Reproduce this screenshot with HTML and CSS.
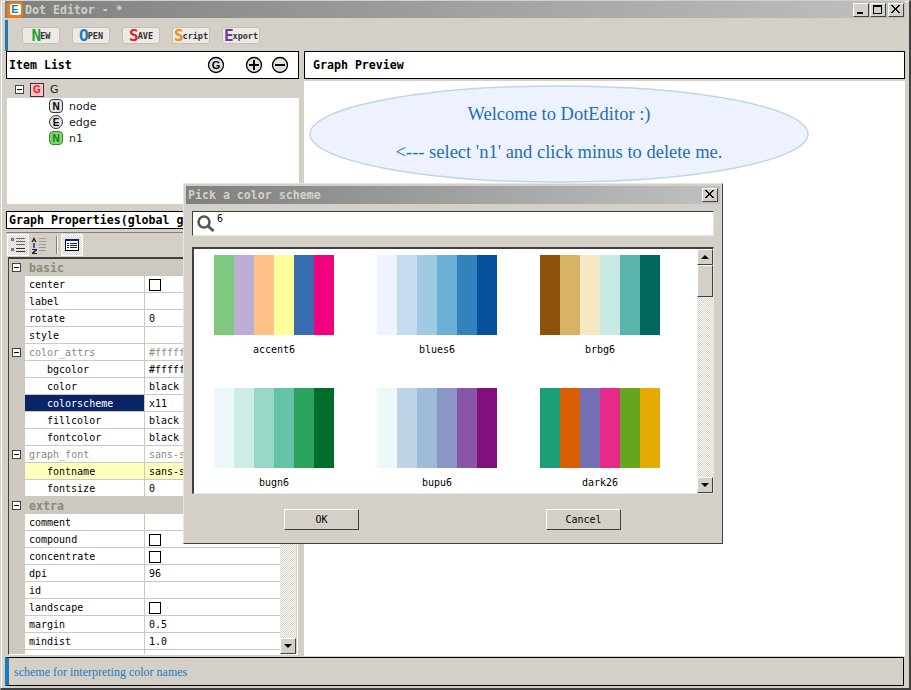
FILE: index.html
```html
<!DOCTYPE html>
<html lang="en">
<head>
    <meta charset="UTF-8">
    <meta name="viewport" content="width=device-width, initial-scale=1.0">
    <title>Dot Editor</title>
    <link rel="stylesheet" href="styles.css">
</head>
<body>
<div class="window">
    <!-- Title bar -->
    <div class="title-bar">
        <span class="app-icon"><span>E</span></span>
        <span class="title-text">Dot Editor - *</span>
        <div class="win-buttons">
            <button class="win-btn"><svg width="15" height="13" viewBox="0 0 15 13"><rect x="4" y="9" width="6" height="2" fill="#000"/></svg></button>
            <button class="win-btn"><svg width="15" height="13" viewBox="0 0 15 13"><rect x="3.5" y="2.5" width="8" height="8" fill="none" stroke="#000"/><rect x="3" y="2" width="9" height="2" fill="#000"/></svg></button>
            <button class="win-btn win-close"><svg width="15" height="13" viewBox="0 0 15 13"><path d="M3 2l8 8M4 2l8 8M11 2l-8 8M12 2l-8 8" stroke="#000" fill="none"/></svg></button>
        </div>
    </div>

    <!-- Toolbar -->
    <div class="toolbar">
        <button class="tool-btn"><b class="c-green">N</b>EW</button>
        <button class="tool-btn"><b class="c-blue">O</b>PEN</button>
        <button class="tool-btn"><b class="c-red">S</b>AVE</button>
        <button class="tool-btn"><b class="c-orange">S</b>cript</button>
        <button class="tool-btn"><b class="c-purple">E</b>xport</button>
    </div>

    <div class="panes">
        <!-- Left column -->
        <div class="left-pane">
            <div class="head-box item-head">
                <span class="head-label">Item List</span>
                <div class="head-icons">
                    <svg class="g-btn" width="18" height="18" viewBox="0 0 18 18"><circle cx="9" cy="9" r="7.5" fill="#e2e2e2" stroke="#000" stroke-width="1.3"/><text x="9" y="13" text-anchor="middle" class="g-letter">G</text></svg>
                    <svg class="plus-btn" width="18" height="18" viewBox="0 0 18 18"><circle cx="9" cy="9" r="7.5" fill="#e2e2e2" stroke="#000" stroke-width="1.3"/><path d="M4 9h10M9 4v10" stroke="#000" stroke-width="2"/></svg>
                    <svg class="minus-btn" width="18" height="18" viewBox="0 0 18 18"><circle cx="9" cy="9" r="7.5" fill="#e2e2e2" stroke="#000" stroke-width="1.3"/><path d="M4 9h10" stroke="#000" stroke-width="2"/></svg>
                </div>
            </div>

            <div class="tree">
                <div class="tree-root">
                    <span class="box"></span>
                    <span class="badge badge-g">G</span>
                    <span class="tree-label">G</span>
                </div>
                <div class="tree-body">
                    <div class="tree-row"><span class="badge badge-n">N</span><span class="tree-label">node</span></div>
                    <div class="tree-row"><span class="badge badge-e">E</span><span class="tree-label">edge</span></div>
                    <div class="tree-row"><span class="badge badge-g2">N</span><span class="tree-label">n1</span></div>
                </div>
            </div>

            <div class="head-box props-head"><span class="head-label">Graph Properties(global graph)</span></div>

            <div class="grid-tools">
                <span class="grid-tool pressed">
                    <svg width="18" height="18" viewBox="0 0 18 18"><g fill="#777"><rect x="2" y="2" width="3" height="3"/><rect x="2" y="12" width="3" height="3"/></g><path d="M7 2.500h9M7 5.500h9M7 8.500h9" stroke="#666"/><path d="M7 12.500h9M7 15.500h9" stroke="#333"/></svg>
                </span>
                <span class="grid-tool">
                    <svg width="18" height="18" viewBox="0 0 18 18"><path d="M3 1L.5 6h1.500L3 4l1 2h1.500zM1 13h5v1.300L3 17h3v1H1v-1.300L4 14H1z" fill="#222"/><path d="M3 7v5" stroke="#1a2fb0" stroke-width="1.500"/><path d="M8 2.500h7M8 5.500h7M8 8.500h7M8 11.500h7M8 14.500h7" stroke="#999"/></svg>
                </span>
                <span class="tool-sep"></span>
                <span class="grid-tool pressed">
                    <svg width="18" height="18" viewBox="0 0 18 18"><rect x="2.500" y="3.500" width="13" height="11" fill="#fff" stroke="#000"/><rect x="2" y="3" width="14" height="2" fill="#0a1f8f"/><path d="M4 7.500h2M7 7.500h7M4 9.500h2M7 9.500h7M4 11.500h2M7 11.500h7" stroke="#0a1f8f"/></svg>
                </span>
            </div>

            <div class="prop-grid">
                <div class="prop-rows">
                    <div class="group"><span class="box"></span><span>basic</span></div>
                    <div class="row"><span class="name">center</span><span class="value"><i class="check"></i></span></div>
                    <div class="row"><span class="name">label</span><span class="value"></span></div>
                    <div class="row"><span class="name">rotate</span><span class="value">0</span></div>
                    <div class="row"><span class="name">style</span><span class="value"></span></div>
                    <div class="row muted"><span class="box"></span><span class="name">color_attrs</span><span class="value">#ffffff</span></div>
                    <div class="row sub"><span class="name">bgcolor</span><span class="value">#ffffff</span></div>
                    <div class="row sub"><span class="name">color</span><span class="value">black</span></div>
                    <div class="row sub selected"><span class="name">colorscheme</span><span class="value">x11</span></div>
                    <div class="row sub"><span class="name">fillcolor</span><span class="value">black</span></div>
                    <div class="row sub"><span class="name">fontcolor</span><span class="value">black</span></div>
                    <div class="row muted"><span class="box"></span><span class="name">graph_font</span><span class="value">sans-serif</span></div>
                    <div class="row sub changed"><span class="name">fontname</span><span class="value">sans-serif</span></div>
                    <div class="row sub"><span class="name">fontsize</span><span class="value">0</span></div>
                    <div class="group"><span class="box"></span><span>extra</span></div>
                    <div class="row"><span class="name">comment</span><span class="value"></span></div>
                    <div class="row"><span class="name">compound</span><span class="value"><i class="check"></i></span></div>
                    <div class="row"><span class="name">concentrate</span><span class="value"><i class="check"></i></span></div>
                    <div class="row"><span class="name">dpi</span><span class="value">96</span></div>
                    <div class="row"><span class="name">id</span><span class="value"></span></div>
                    <div class="row"><span class="name">landscape</span><span class="value"><i class="check"></i></span></div>
                    <div class="row"><span class="name">margin</span><span class="value">0.5</span></div>
                    <div class="row"><span class="name">mindist</span><span class="value">1.0</span></div>
                    <div class="row"><span class="name"></span><span class="value"></span></div>
                </div>
                <div class="scrollbar">
                    <span class="scroll-btn"><i class="arrow-up"></i></span>
                    <span class="scroll-track"></span>
                    <span class="scroll-btn"><i class="arrow-down"></i></span>
                </div>
            </div>
        </div>

        <!-- Right column -->
        <div class="right-pane">
            <div class="head-box"><span class="head-label preview-label">Graph Preview</span></div>
            <div class="preview">
                <svg class="graph" width="601" height="574" viewBox="0 0 601 574">
                    <ellipse cx="255" cy="53" rx="249" ry="48" fill="#edf2fe" stroke="#bcd7e8" stroke-width="1.500"/>
                    <text x="255" y="39" text-anchor="middle" class="node-text">Welcome to DotEditor :)</text>
                    <text x="255" y="77" text-anchor="middle" class="node-text">&lt;--- select 'n1' and click minus to delete me.</text>
                </svg>
            </div>
        </div>
    </div>

    <!-- Status bar -->
    <div class="status">scheme for interpreting color names</div>

    <!-- Color scheme dialog -->
    <div class="dialog">
        <div class="dialog-title">
            <span class="title-text">Pick a color scheme</span>
            <button class="win-btn dialog-close"><svg width="15" height="13" viewBox="0 0 15 13"><path d="M3 2l8 8M4 2l8 8M11 2l-8 8M12 2l-8 8" stroke="#000" fill="none"/></svg></button>
        </div>
        <div class="search">
            <svg width="20" height="20" viewBox="0 0 20 20"><circle cx="8" cy="8" r="5.500" fill="none" stroke="#555" stroke-width="2.500"/><path d="M12 12l5.500 5" stroke="#555" stroke-width="3"/></svg>
            <span class="search-text">6</span>
        </div>
        <div class="scheme-list">
            <div class="schemes">
                <div class="scheme"><div class="swatch accent6"></div><span>accent6</span></div>
                <div class="scheme"><div class="swatch blues6"></div><span>blues6</span></div>
                <div class="scheme"><div class="swatch brbg6"></div><span>brbg6</span></div>
                <div class="scheme"><div class="swatch bugn6"></div><span>bugn6</span></div>
                <div class="scheme"><div class="swatch bupu6"></div><span>bupu6</span></div>
                <div class="scheme"><div class="swatch dark26"></div><span>dark26</span></div>
            </div>
            <div class="scrollbar">
                <span class="scroll-btn"><i class="arrow-up"></i></span>
                <span class="scroll-thumb"></span>
                <span class="scroll-track"></span>
                <span class="scroll-btn"><i class="arrow-down"></i></span>
            </div>
        </div>
        <div class="dialog-actions">
            <button class="push-btn">OK</button>
            <button class="push-btn">Cancel</button>
        </div>
    </div>
</div>
</body>
</html>
```

FILE: styles.css
```css
* {
    box-sizing: border-box;
}

body {
    margin: 0;
    background-color: #fff;
    font-family: "DejaVu Sans Mono", "Liberation Mono", monospace;
    font-size: 10px;
    color: #000;
}

button {
    padding: 0;
    font-family: inherit;
}

.window {
    position: relative;
    width: 911px;
    height: 690px;
    overflow: hidden;
    padding: 0 5px;
    background-color: #d4d0c8;
    border-left: 1px solid #d4d0c8;
    border-top: 1px solid #d4d0c8;
    border-right: 2px solid #404040;
    border-bottom: 2px solid #404040;
    box-shadow: inset 1px 1px 0 #fff;
}

/* title bars */
.title-bar {
    display: flex;
    align-items: center;
    height: 17px;
    margin-left: -1px;
    margin-right: -1px;
    background: linear-gradient(90deg, #808080, #c0c0c0);
}

.app-icon {
    display: flex;
    align-items: center;
    justify-content: center;
    width: 16px;
    height: 16px;
    margin-left: 2px;
    background-color: #f07c10;
    border-radius: 3px;
}

.app-icon span {
    width: 11px;
    height: 11px;
    background-color: #fff;
    border-radius: 2px;
    color: #1f78b8;
    font: bold 11px/11px "Liberation Sans", sans-serif;
    text-align: center;
}

.title-text {
    margin-left: 2px;
    font-size: 11.6px;
    font-weight: bold;
    color: #d4d0c8;
    white-space: pre;
}

.win-buttons {
    display: flex;
    gap: 1px;
    margin-left: auto;
    margin-right: 1px;
}

.win-btn {
    display: block;
    width: 16px;
    height: 14px;
    background-color: #d4d0c8;
    border: 1px solid;
    border-color: #fff #404040 #404040 #fff;
}

.win-btn svg {
    display: block;
    margin: -1px 0 0 -1px;
}

.win-close {
    margin-left: 1px;
}

/* main toolbar */
.toolbar {
    display: flex;
    align-items: center;
    gap: 12px;
    height: 31px;
    margin-top: 2px;
    margin-left: -1px;
    padding-left: 14px;
    border-left: 3px solid #1f78b8;
}

.tool-btn {
    display: flex;
    align-items: center;
    justify-content: center;
    width: 38px;
    height: 17px;
    background-color: #eceae5;
    border: 1px solid #c4c0b8;
    border-radius: 3px;
    font: bold 8.5px "DejaVu Sans Mono", monospace;
    color: #333;
}

.tool-btn b {
    font-size: 16px;
    line-height: 14px;
    letter-spacing: -1px;
}

.c-green { color: #1fa03c; }
.c-blue { color: #1f78b8; }
.c-red { color: #e0202c; }
.c-orange { color: #f58a10; }
.c-purple { color: #6a3fa0; }

/* panes */
.panes {
    display: flex;
    height: 605px;
}

.left-pane {
    flex: none;
    width: 293px;
}

.right-pane {
    flex: none;
    width: 601px;
    margin-left: 5px;
}

.head-box {
    display: flex;
    align-items: center;
    height: 28px;
    background-color: #fff;
    border: 1px solid #000;
}

.head-label {
    padding-left: 2px;
    font-size: 11.6px;
    font-weight: bold;
    white-space: nowrap;
}

.preview-label {
    padding-left: 8px;
}

.head-icons {
    display: flex;
    align-items: center;
    margin-left: auto;
    margin-right: 9px;
}

.head-icons svg {
    display: block;
}

.plus-btn {
    margin-left: 20px;
}

.minus-btn {
    margin-left: 8px;
}

.g-letter {
    font: bold 11px "Liberation Sans", sans-serif;
}

/* item tree */
.tree {
    height: 123px;
    margin-top: 2px;
    margin-left: 1px;
}

.tree-root {
    display: flex;
    align-items: center;
    height: 17px;
    padding-left: 8px;
}

.tree-body {
    height: 106px;
    padding-left: 42px;
    background-color: #fff;
}

.tree-row {
    display: flex;
    align-items: center;
    height: 16px;
}

.tree-label {
    margin-left: 6px;
    font: 11px "DejaVu Sans", sans-serif;
    color: #222;
}

.badge {
    display: flex;
    align-items: center;
    justify-content: center;
    width: 14px;
    height: 14px;
    border: 1px solid #333;
    border-radius: 4px;
    background-color: #e6e6e6;
    font: bold 10px "Liberation Sans", sans-serif;
}

.badge-g {
    margin-left: 6px;
    border-radius: 0;
    background-color: #ffc4c4;
    color: #f01020;
}

.badge-e {
    border-radius: 7px;
}

.badge-g2 {
    background-color: #7fd46a;
    color: #0f7a20;
    border-color: #3a8a30;
}

.box {
    display: inline-block;
    position: relative;
    flex: none;
    width: 9px;
    height: 9px;
    background-color: #fff;
    border: 1px solid #444;
}

.box::after {
    content: "";
    position: absolute;
    left: 1px;
    top: 3px;
    width: 5px;
    height: 1px;
    background-color: #000;
}

/* properties */
.props-head {
    height: 18px;
    margin-top: 7px;
    overflow: hidden;
}

.grid-tools {
    display: flex;
    align-items: center;
    height: 25px;
    margin-top: 3px;
    padding-left: 1px;
    border-top: 1px solid #808080;
}

.grid-tool {
    display: flex;
    align-items: center;
    justify-content: center;
    width: 22px;
    height: 22px;
}

.grid-tool.pressed {
    border: 1px solid #fff;
    background: repeating-conic-gradient(#d4d0c8 0 25%, #fff 0 50%) 0 0 / 2px 2px;
}

.tool-sep {
    width: 2px;
    height: 18px;
    margin: 0 3px 0 5px;
    border-left: 1px solid #808080;
    border-right: 1px solid #fff;
}

.prop-grid {
    display: flex;
    width: 290px;
    height: 398px;
    margin-left: 2px;
    border-top: 2px solid #404040;
    border-left: 1px solid #404040;
    border-right: 1px solid #fff;
    border-bottom: 1px solid #fff;
    overflow: hidden;
}

.prop-rows {
    width: 271px;
    flex: none;
}

.group,
.row {
    display: flex;
    align-items: center;
    position: relative;
    height: 17px;
}

.group {
    gap: 8px;
    padding-left: 3px;
    background-color: #cdc9c1;
    font-weight: bold;
    font-size: 11.6px;
    color: #8c887f;
}

.row {
    padding-left: 16px;
    background: linear-gradient(90deg, #cdc9c1 16px, #fff 16px);
}

.row .box {
    position: absolute;
    left: 3px;
    top: 4px;
}

.name {
    flex: none;
    width: 120px;
    height: 17px;
    padding-left: 4px;
    border-bottom: 1px solid #cdc9c1;
    border-right: 1px solid #cdc9c1;
    line-height: 18px;
}

.value {
    flex: 1;
    height: 17px;
    padding-left: 4px;
    border-bottom: 1px solid #cdc9c1;
    line-height: 18px;
}

.sub .name {
    padding-left: 22px;
}

.muted .name,
.muted .value {
    color: #8c887f;
}

.selected .name {
    background-color: #0a2468;
    color: #fff;
}

.changed .name,
.changed .value {
    background-color: #ffffc0;
}

.check {
    display: block;
    width: 12px;
    height: 12px;
    margin-top: 3px;
    background-color: #fff;
    border: 1px solid #000;
}

/* scrollbars */
.scrollbar {
    display: flex;
    flex-direction: column;
    flex: none;
    width: 16px;
}

.scroll-btn,
.scroll-thumb {
    display: flex;
    align-items: center;
    justify-content: center;
    flex: none;
    height: 16px;
    background-color: #d4d0c8;
    border: 1px solid;
    border-color: #fff #404040 #404040 #fff;
}

.scroll-thumb {
    height: 32px;
}

.scroll-track {
    flex: 1;
    background: repeating-conic-gradient(#d4d0c8 0 25%, #fff 0 50%) 0 0 / 2px 2px;
}

.arrow-up,
.arrow-down {
    width: 0;
    height: 0;
    border-left: 4px solid transparent;
    border-right: 4px solid transparent;
}

.arrow-up {
    border-bottom: 4px solid #000;
}

.arrow-down {
    border-top: 4px solid #000;
}

/* preview */
.preview {
    height: 575px;
    margin-top: 2px;
    background-color: #fff;
}

.graph {
    display: block;
}

.node-text {
    font-family: "Liberation Serif", serif;
    font-size: 18.5px;
    fill: #1f6fb5;
}

/* status */
.status {
    height: 29px;
    margin-top: 1px;
    margin-left: -1px;
    padding-left: 5px;
    background-color: #d4d0c8;
    border-top: 1px solid #000;
    border-right: 1px solid #000;
    border-bottom: 1px solid #000;
    border-left: 4px solid #1f78b8;
    font: 12px/28px "Liberation Serif", serif;
    color: #1f7abf;
}

/* dialog */
.dialog {
    position: absolute;
    left: 182px;
    top: 182px;
    width: 540px;
    height: 361px;
    padding: 2px 2px 0;
    background-color: #d4d0c8;
    border: 1px solid;
    border-color: #e8e6e0 #404040 #404040 #e8e6e0;
}

.dialog-title {
    display: flex;
    align-items: center;
    height: 18px;
    background: linear-gradient(90deg, #808080, #c0c0c0);
}

.dialog-close {
    margin-left: auto;
    margin-right: 2px;
}

.search {
    display: flex;
    align-items: flex-start;
    gap: 1px;
    height: 25px;
    margin: 7px 6px 0;
    padding: 2px 0 0 3px;
    background-color: #fff;
    border: 1px solid;
    border-color: #404040 #e8e6e0 #e8e6e0 #404040;
    font-size: 10px;
}

.search-text {
    line-height: 10px;
}

.scheme-list {
    display: flex;
    height: 247px;
    margin: 11px 6px 0;
    background-color: #fff;
    border: 1px solid;
    border-top: 2px solid #404040;
    border-left: 2px solid #404040;
    border-color: #404040 #e8e6e0 #e8e6e0 #404040;
    overflow: hidden;
}

.schemes {
    flex: 1;
    min-width: 0;
    display: grid;
    grid-template-columns: repeat(3, 163px);
    grid-auto-rows: 133px;
    padding: 6px 0 0 20px;
}

.scheme {
    width: 120px;
    text-align: center;
}

.swatch {
    height: 80px;
    margin-bottom: 9px;
}

.accent6 { background: linear-gradient(90deg, #7fc97f 0 20px, #beaed4 0 40px, #fdc086 0 60px, #ffff99 0 80px, #386cb0 0 100px, #f0027f 0); }
.blues6 { background: linear-gradient(90deg, #eff3ff 0 20px, #c6dbef 0 40px, #9ecae1 0 60px, #6baed6 0 80px, #3182bd 0 100px, #08519c 0); }
.brbg6 { background: linear-gradient(90deg, #8c510a 0 20px, #d8b365 0 40px, #f6e8c3 0 60px, #c7eae5 0 80px, #5ab4ac 0 100px, #01665e 0); }
.bugn6 { background: linear-gradient(90deg, #edf8fb 0 20px, #ccece6 0 40px, #99d8c9 0 60px, #66c2a4 0 80px, #2ca25f 0 100px, #006d2c 0); }
.bupu6 { background: linear-gradient(90deg, #edf8fb 0 20px, #bfd3e6 0 40px, #9ebcda 0 60px, #8c96c6 0 80px, #8856a7 0 100px, #810f7c 0); }
.dark26 { background: linear-gradient(90deg, #1b9e77 0 20px, #d95f02 0 40px, #7570b3 0 60px, #e7298a 0 80px, #66a61e 0 100px, #e6ab02 0); }

.dialog-actions {
    display: flex;
    justify-content: space-between;
    padding: 15px 99px 0 98px;
}

.push-btn {
    width: 75px;
    height: 21px;
    background-color: #d4d0c8;
    border: 1px solid;
    border-color: #fff #404040 #404040 #fff;
    font-size: 10px;
}
```
